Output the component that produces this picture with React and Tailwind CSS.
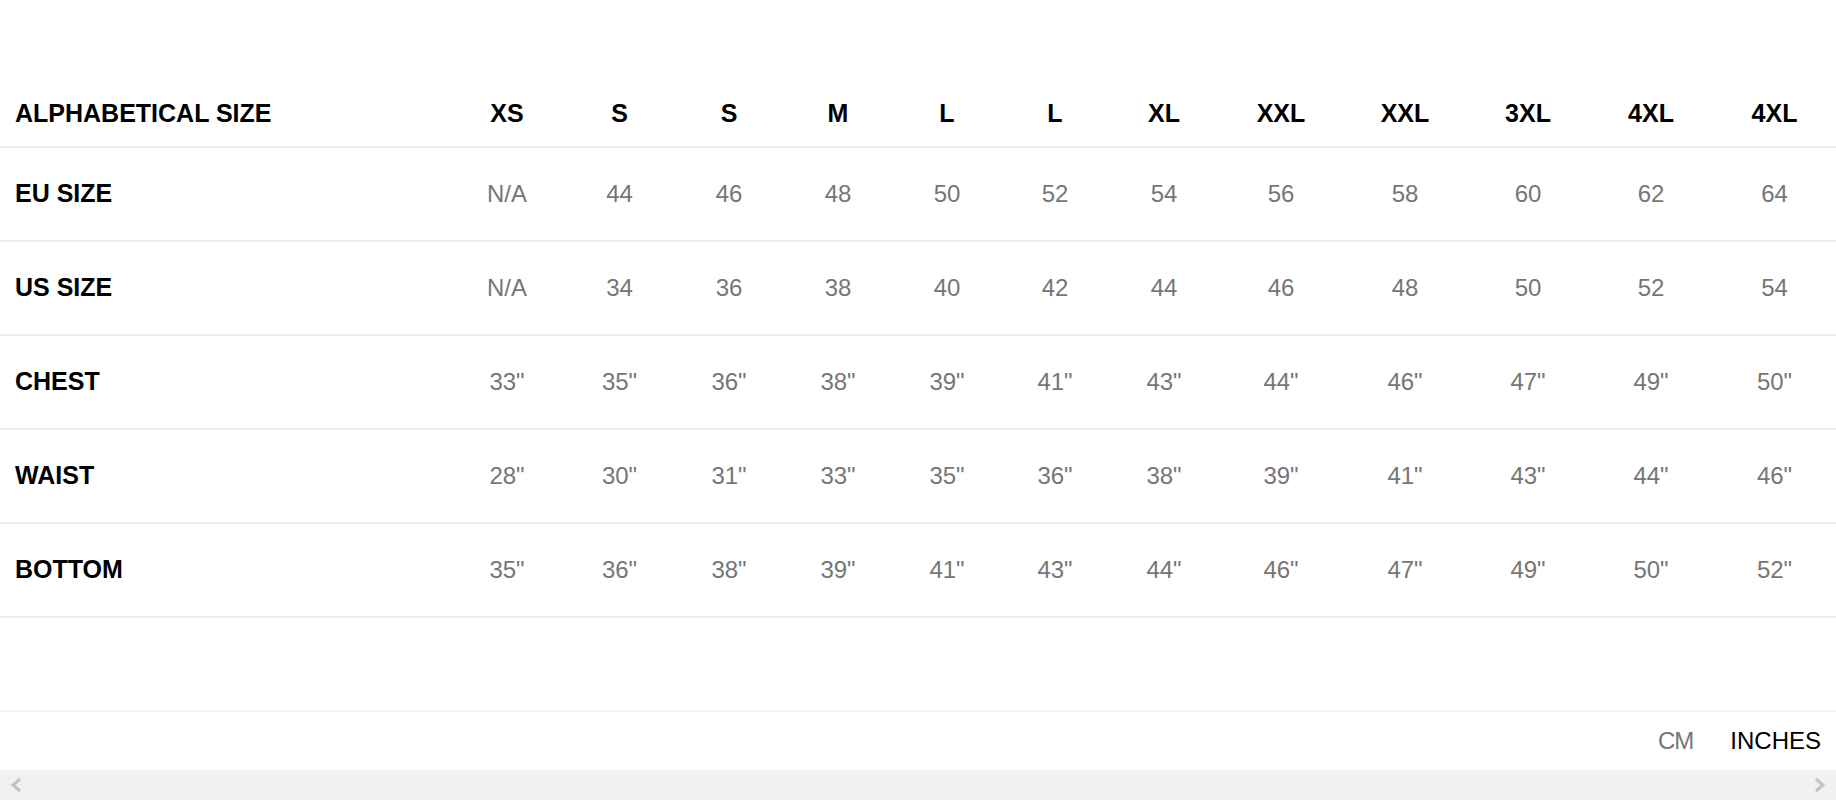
import React from "react";

const sizes = ["XS", "S", "S", "M", "L", "L", "XL", "XXL", "XXL", "3XL", "4XL", "4XL"];
const rows = [
  ["EU SIZE", ["N/A", "44", "46", "48", "50", "52", "54", "56", "58", "60", "62", "64"]],
  ["US SIZE", ["N/A", "34", "36", "38", "40", "42", "44", "46", "48", "50", "52", "54"]],
  ["CHEST", ['33"', '35"', '36"', '38"', '39"', '41"', '43"', '44"', '46"', '47"', '49"', '50"']],
  ["WAIST", ['28"', '30"', '31"', '33"', '35"', '36"', '38"', '39"', '41"', '43"', '44"', '46"']],
  ["BOTTOM", ['35"', '36"', '38"', '39"', '41"', '43"', '44"', '46"', '47"', '49"', '50"', '52"']],
];

const grid =
  "grid grid-cols-[450px_114px_111px_108px_110px_108px_108px_110px_124px_124px_122px_124px_123px] items-center";

export default function App() {
  return (
    <div
      className="w-[1836px] h-[800px] bg-white flex flex-col overflow-hidden"
      style={{ fontFamily: '"Liberation Sans", Arial, sans-serif' }}
    >
      <div className="h-[82px]" />
      <div className={`${grid} h-[66px] border-b-2 border-[#efefef]`}>
        <div className="pl-[15px] text-[25px] font-bold text-black">ALPHABETICAL SIZE</div>
        {sizes.map((s, i) => (
          <div key={i} className="text-center text-[25px] font-bold text-black">
            {s}
          </div>
        ))}
      </div>
      {rows.map(([label, vals]) => (
        <div key={label} className={`${grid} h-[94px] border-b-2 border-[#efefef]`}>
          <div className="pl-[15px] text-[25px] font-bold text-black">{label}</div>
          {vals.map((v, i) => (
            <div key={i} className="text-center text-[24px] text-[#767677]">
              {v}
            </div>
          ))}
        </div>
      ))}
      <div className="h-[94px] border-b-2 border-[#f3f3f3]" />
      <div className="h-[58px] flex items-center justify-end gap-[37px] pr-[15px] text-[24px]">
        <span className="text-[#767677] tracking-[-1px]">CM</span>
        <span className="text-black">INCHES</span>
      </div>
      <div className="flex-1 bg-[#f1f1f1] flex items-center justify-between px-[9px]">
        <svg width="14" height="16" viewBox="0 0 14 16">
          <polyline points="11,2 4,8 11,14" fill="none" stroke="#c3c3c3" strokeWidth="3" />
        </svg>
        <svg width="14" height="16" viewBox="0 0 14 16">
          <polyline points="3,2 10,8 3,14" fill="none" stroke="#c3c3c3" strokeWidth="3" />
        </svg>
      </div>
    </div>
  );
}
